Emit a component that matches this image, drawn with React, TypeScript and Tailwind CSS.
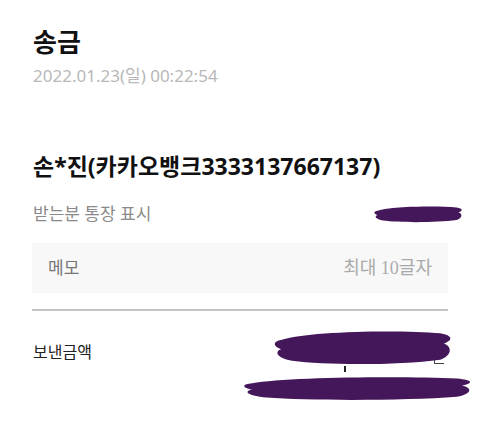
export default function App() {
  return (
    <div
      className="w-[480px] h-[422px] bg-white overflow-hidden flex flex-col"
      style={{ fontFamily: '"Noto Sans", "Noto Sans CJK KR", sans-serif' }}
    >
      <div className="px-[33px] pt-[24px] flex flex-col">
        <h1 className="text-[26px] font-bold leading-[36px] text-[#111]">송금</h1>
        <p className="mt-[6px] text-[17px] leading-[20px] text-[#b8b8b8]">
          2022.01.23(일) 00:22:54
        </p>

        <p className="mt-[64px] text-[23px] font-bold leading-[32px] text-[#111]">
          손*진(카카오뱅크3333137667137)
        </p>

        <div className="mt-[20px] flex items-center justify-between">
          <span className="text-[17px] leading-[24px] text-[#8a8a8a]">받는분 통장 표시</span>
          <Scribble className="w-[92px] h-[22px] mr-[-17px]" />
        </div>
      </div>

      <div className="mx-[32px] mt-[17px] h-[50px] bg-[#f8f8f8] flex items-center justify-between px-[16px] shrink-0">
        <span className="text-[17px] text-[#777]">메모</span>
        <span
          className="text-[18px] text-[#aaa]"
          style={{ fontFamily: '"Liberation Serif", "Noto Sans CJK KR", serif' }}
        >
          최대 10글자
        </span>
      </div>

      <div className="mx-[32px] mt-[16px] h-[2px] bg-[#c4c4c4] shrink-0" />

      <div className="relative px-[33px] mt-[29px]">
        <span className="text-[16px] leading-[20px] text-[#222]">보낸금액</span>
        {/* redacted amount */}
        <span className="absolute left-[344px] top-[26px] w-[2px] h-[6px] bg-[#222]" />
        <span className="absolute left-[434px] top-[14px] w-[10px] h-[10px] border-l border-b border-[#444]" />
        <Scribble className="absolute left-[270px] top-[-16px] w-[185px] h-[46px]" />
        <Scribble className="absolute left-[238px] top-[32px] w-[238px] h-[32px]" />
      </div>
    </div>
  );
}

function Scribble({ className }: { className?: string }) {
  return (
    <svg viewBox="0 0 100 40" preserveAspectRatio="none" className={className}>
      <path
        d="M6 14 C20 6 70 5 92 8 C99 10 99 14 94 17 C99 20 98 28 92 31 C70 36 30 36 12 32 C4 30 2 24 6 22 C1 19 2 15 6 14 Z"
        fill="#44165a"
      />
    </svg>
  );
}
